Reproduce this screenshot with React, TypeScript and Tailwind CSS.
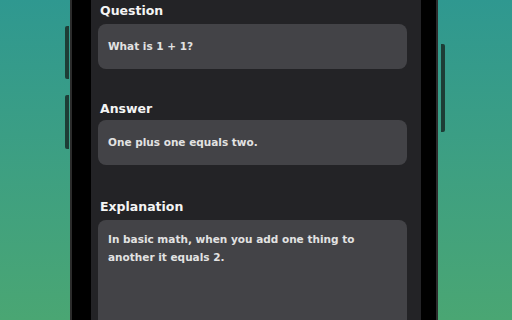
const font = { fontFamily: '"DejaVu Sans", "Open Sans", sans-serif' };

const Field = ({ label, children, className = "" }: { label: string; children: React.ReactNode; className?: string }) => (
  <div className={className}>
    <div className="pl-[2px] text-[12.5px] leading-[16px] font-bold text-[#f4f4f4]">{label}</div>
    {children}
  </div>
);

export default function App() {
  return (
    <div
      className="relative h-[320px] w-[512px] overflow-hidden bg-gradient-to-b from-[#2f9890] to-[#4aa673]"
      style={font}
    >
      <div className="ml-[70px] mt-[-40px] relative h-[420px] w-[368px] rounded-[40px] border-[2px] border-[#2c2c2c] bg-black pl-[19px] pr-[15px]">
        {/* side buttons */}
        <div className="absolute left-[-7px] top-[64px] h-[53px] w-[4px] rounded-l-[2px] bg-[#1d3d36]" />
        <div className="absolute left-[-7px] top-[133px] h-[54px] w-[4px] rounded-l-[2px] bg-[#1d3d36]" />
        <div className="absolute right-[-9px] top-[82px] h-[88px] w-[4px] rounded-r-[2px] bg-[#1d3d36]" />

        <div className="flex h-full flex-col bg-[#232326] pl-[7px] pr-[14px] pt-[41px]">
          <Field label="Question">
            <div className="mt-[5px] flex h-[45px] items-center rounded-[8px] bg-[#434347] px-[10px] text-[10.5px] font-bold text-[#e2e2e2]">
              What is 1 + 1?
            </div>
          </Field>
          <Field label="Answer" className="mt-[32px]">
            <div className="mt-[3px] flex h-[45px] items-center rounded-[8px] bg-[#434347] px-[10px] text-[10.5px] font-bold text-[#e2e2e2]">
              One plus one equals two.
            </div>
          </Field>
          <Field label="Explanation" className="mt-[34px]">
            <div className="mt-[5px] h-[160px] rounded-[8px] bg-[#434347] px-[10px] pt-[10px] text-[10.5px] leading-[18px] font-bold text-[#e2e2e2]">
              In basic math, when you add one thing to
              <br />
              another it equals 2.
            </div>
          </Field>
        </div>
      </div>
    </div>
  );
}
